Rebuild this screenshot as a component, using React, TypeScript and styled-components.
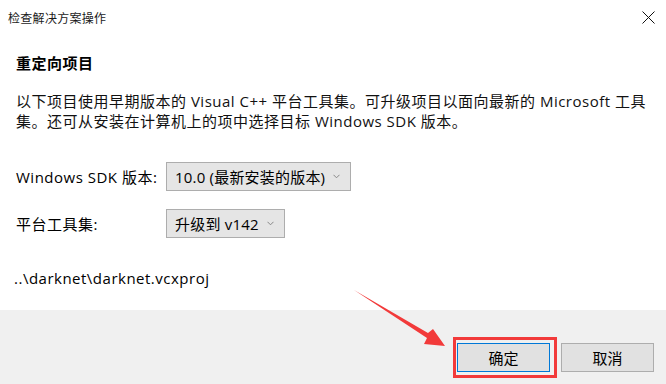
import React from 'react';
import styled, { createGlobalStyle } from 'styled-components';

const GlobalStyle = createGlobalStyle`
  html, body {
    margin: 0;
    padding: 0;
    background: #ffffff;
  }
  body {
    font-family: "Open Sans", "Noto Sans CJK SC", sans-serif;
    color: #000;
  }
`;

const Window = styled.div`
  position: relative;
  width: 666px;
  height: 384px;
  display: flex;
  flex-direction: column;
  background: #ffffff;
  overflow: hidden;
`;

const TitleBar = styled.div`
  height: 36px;
  display: flex;
  align-items: center;
  justify-content: space-between;
  padding: 0 11px 0 8px;
  font-size: 12px;
  letter-spacing: 0.3px;
  color: #1a1a1a;
`;

const CloseBtn = styled.div`
  width: 14px;
  height: 14px;
  display: flex;
  align-items: center;
  justify-content: center;
  margin-top: -2px;
`;

const Body = styled.div`
  flex: 1;
  padding: 0 16px;
  letter-spacing: 0.5px;
`;

const Heading = styled.div`
  margin-top: 17px;
  font-size: 15px;
  font-weight: 700;
  line-height: 20px;
`;

const Desc = styled.p`
  margin: 18px 0 0;
  font-size: 15px;
  line-height: 20px;
  color: #111;
  white-space: nowrap;
`;

const Form = styled.div`
  margin-top: 31px;
  display: grid;
  grid-template-columns: 150px auto;
  row-gap: 18px;
  align-items: center;
  justify-items: start;
`;

const Label = styled.span`
  font-size: 15px;
`;

const Select = styled.div<{ $w: number }>`
  width: ${p => p.$w}px;
  height: 29px;
  box-sizing: border-box;
  border: 1px solid #adadad;
  background: #e5e5e5;
  display: flex;
  align-items: center;
  justify-content: space-between;
  padding: 0 10px 0 8px;
  font-size: 15px;
  letter-spacing: 0.2px;
  white-space: nowrap;
`;

const PathText = styled.div`
  margin-top: 30px;
  margin-left: -2px;
  font-size: 15px;
  line-height: 20px;
`;

const Footer = styled.div`
  height: 74px;
  background: #f0f0f0;
  display: flex;
  justify-content: flex-end;
  align-items: flex-start;
  gap: 11px;
  padding: 33px 12px 0 0;
  box-sizing: border-box;
`;

const BtnWrap = styled.div`
  position: relative;
`;

const Button = styled.button<{ $primary?: boolean }>`
  width: 93px;
  height: 29px;
  box-sizing: border-box;
  border: 1px solid ${p => (p.$primary ? '#0078d7' : '#adadad')};
  background: #e1e1e1;
  font-family: inherit;
  font-size: 15px;
  color: #000;
  padding: 0;
  cursor: default;
`;

const RedBox = styled.div`
  position: absolute;
  left: -4px;
  top: -6px;
  width: 104px;
  height: 41px;
  box-sizing: border-box;
  border: 3px solid #f23a3a;
  pointer-events: none;
`;

const Arrow = styled.svg`
  position: absolute;
  left: 0;
  top: 0;
  pointer-events: none;
`;

const Chevron = () => (
  <svg width="7" height="5" viewBox="0 0 7 5">
    <path d="M0.5 0.8 L3.5 3.8 L6.5 0.8" fill="none" stroke="#888" strokeWidth="1" />
  </svg>
);

export default function App() {
  return (
    <>
      <GlobalStyle />
      <Window>
        <TitleBar>
          <span>检查解决方案操作</span>
          <CloseBtn>
            <svg width="13" height="13" viewBox="0 0 13 13">
              <path d="M0.5 0.5 L12.5 12.5 M12.5 0.5 L0.5 12.5" stroke="#111" strokeWidth="1" />
            </svg>
          </CloseBtn>
        </TitleBar>
        <Body>
          <Heading>重定向项目</Heading>
          <Desc>
            以下项目使用早期版本的 Visual C++ 平台工具集。可升级项目以面向最新的 Microsoft 工具
            <br />
            集。还可从安装在计算机上的项中选择目标 Windows SDK 版本。
          </Desc>
          <Form>
            <Label>Windows SDK 版本:</Label>
            <Select $w={185}>
              <span>10.0 (最新安装的版本)</span>
              <Chevron />
            </Select>
            <Label>平台工具集:</Label>
            <Select $w={119}>
              <span>升级到 v142</span>
              <Chevron />
            </Select>
          </Form>
          <PathText>..\darknet\darknet.vcxproj</PathText>
        </Body>
        <Footer>
          <BtnWrap>
            <Button $primary>确定</Button>
            <RedBox />
          </BtnWrap>
          <BtnWrap>
            <Button>取消</Button>
          </BtnWrap>
        </Footer>
        <Arrow width="666" height="384" viewBox="0 0 666 384">
          <polygon points="354,290 428,333 433,329 445,346 424,344 427,338" fill="#f23a3a" />
        </Arrow>
      </Window>
    </>
  );
}
